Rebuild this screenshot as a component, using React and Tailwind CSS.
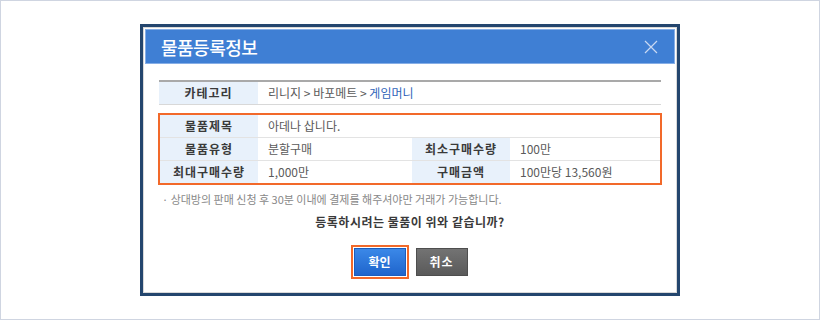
export default function App() {
  const font = { fontFamily: '"Noto Sans CJK KR", "Noto Sans", sans-serif' };
  return (
    <div
      className="w-[820px] h-[320px] border border-[#cfd5e1] bg-white flex justify-center pt-[23px]"
      style={font}
    >
      <div className="w-[540px] h-[272px] border-[3px] border-[#24466e] bg-white">
        <div className="h-full border border-[#d9d9d9] p-px flex flex-col">
          <div className="h-[35px] bg-[#3f7fd4] border border-[#86aee6] flex items-center justify-between pl-[15px] pr-[16px]">
            <span className="text-[18px] leading-none text-white font-medium tracking-[-0.5px]">물품등록정보</span>
            <svg width="14" height="14" viewBox="0 0 14 14" className="block">
              <path d="M1 1 L13 13 M13 1 L1 13" stroke="#c9d9f2" strokeWidth="1.2" fill="none" />
            </svg>
          </div>
          <div className="px-[14px] flex flex-col">
            <div className="mt-[16px] border-t-2 border-b border-t-[#a9a9a9] border-b-[#d8d8d8] flex h-[25px] text-[12px]">
              <div className="w-[99px] bg-[#e8f1fb] flex items-center justify-center font-bold text-[#3a3a3a] tracking-[1px]">카테고리</div>
              <div className="flex items-center pl-[10px] text-[#5a5a5a]">
                리니지 &gt; 바포메트 &gt;&nbsp;<span className="text-[#2f63b9]">게임머니</span>
              </div>
            </div>
            <div className="mt-[8px] -mx-px border-2 border-[#f2692a] grid grid-cols-[98px_154px_98px_1fr] text-[12px]">
              <div className="h-[23px] bg-[#e8f1fb] flex items-center justify-center font-bold text-[#3a3a3a] tracking-[1px] border-b border-[#e3e3e3]">물품제목</div>
              <div className="col-span-3 h-[23px] flex items-center pl-[10px] text-[#5a5a5a] border-b border-[#e3e3e3]">아데나 삽니다.</div>
              <div className="h-[23px] bg-[#e8f1fb] flex items-center justify-center font-bold text-[#3a3a3a] tracking-[1px] border-b border-[#e3e3e3]">물품유형</div>
              <div className="h-[23px] flex items-center pl-[10px] text-[#5a5a5a] border-b border-[#e3e3e3]">분할구매</div>
              <div className="h-[23px] bg-[#e8f1fb] flex items-center justify-center font-bold text-[#3a3a3a] tracking-[1px] border-b border-[#e3e3e3]">최소구매수량</div>
              <div className="h-[23px] flex items-center pl-[10px] text-[#5a5a5a] border-b border-[#e3e3e3]">100만</div>
              <div className="h-[22px] bg-[#e8f1fb] flex items-center justify-center font-bold text-[#3a3a3a] tracking-[1px]">최대구매수량</div>
              <div className="h-[22px] flex items-center pl-[10px] text-[#5a5a5a]">1,000만</div>
              <div className="h-[22px] bg-[#e8f1fb] flex items-center justify-center font-bold text-[#3a3a3a] tracking-[1px]">구매금액</div>
              <div className="h-[22px] flex items-center pl-[10px] text-[#5a5a5a]">100만당 13,560원</div>
            </div>
            <div className="mt-[6px] pl-[3px] text-[11px] leading-[16px] text-[#888888]">
              · 상대방의 판매 신청 후 30분 이내에 결제를 해주셔야만 거래가 가능합니다.
            </div>
            <div className="mt-[7px] text-center text-[12px] leading-[16px] font-bold text-[#3a3a3a] tracking-[0.5px]">
              등록하시려는 물품이 위와 같습니까?
            </div>
            <div className="mt-[15px] flex justify-center items-center gap-[7px] pr-[2px]">
              <div className="border-2 border-[#f2692a] p-px">
                <button className="w-[52px] h-[28px] bg-gradient-to-b from-[#3b88e8] to-[#1f65cc] border border-[#1c5dbd] text-white text-[12px] font-bold flex items-center justify-center">
                  확인
                </button>
              </div>
              <button className="w-[52px] h-[28px] bg-gradient-to-b from-[#737373] to-[#5a5a5a] border border-[#4e4e4e] text-white text-[12px] font-bold flex items-center justify-center tracking-[1px]">
                취소
              </button>
            </div>
          </div>
        </div>
      </div>
    </div>
  );
}
